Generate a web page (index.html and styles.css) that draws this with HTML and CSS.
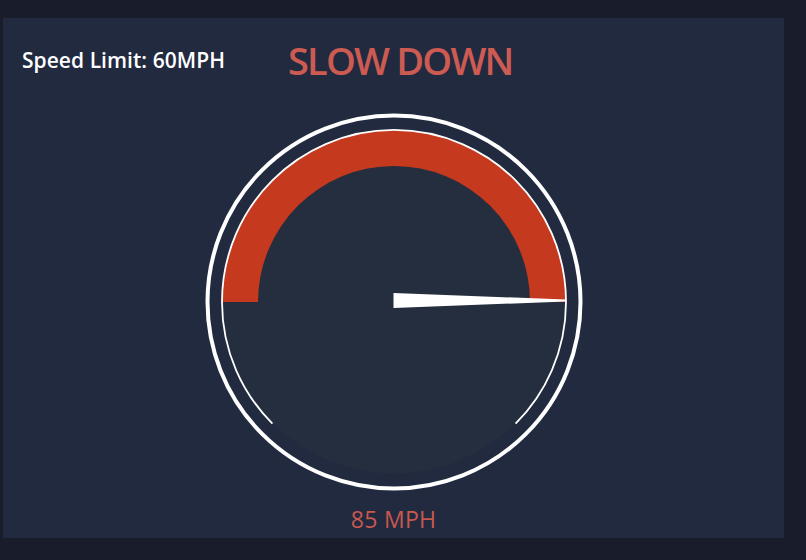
FILE: index.html
```html
<!DOCTYPE html>
<html lang="en">
<head>
    <meta charset="UTF-8">
    <meta name="viewport" content="width=device-width, initial-scale=1.0">
    <title>Speedometer</title>
    <link rel="stylesheet" href="styles.css">
</head>
<body>
    <div class="panel">
        <!-- Top row: limit and warning -->
        <div class="header">
            <span class="limit">Speed Limit: 60MPH</span>
            <h1 class="warning">SLOW DOWN</h1>
        </div>

        <!-- Gauge -->
        <div class="gauge">
            <svg width="400" height="400" viewBox="0 0 400 400">
                <circle cx="200" cy="200" r="186.5" fill="none" stroke="#ffffff" stroke-width="4"/>
                <circle cx="200" cy="200" r="171.5" fill="#252e3e"/>
                <path d="M 28 200 A 172 172 0 0 1 372 200 L 336 200 A 136 136 0 0 0 64 200 Z" fill="#c5391f"/>
                <path d="M 78.4 321.6 A 172 172 0 1 1 321.6 321.6" fill="none" stroke="#ffffff" stroke-width="1.8"/>
                <polygon points="199.5,191 372,197.5 372,199.5 199.5,206" fill="#ffffff"/>
            </svg>
        </div>

        <div class="speed">85 MPH</div>
    </div>
</body>
</html>
```

FILE: styles.css
```css
body {
    margin: 0;
    padding: 18px 0 0 3px;
    background-color: #181c2b;
    font-family: "Open Sans", Arial, sans-serif;
}

.panel {
    width: 781px;
    height: 520px;
    background-color: #222a40;
    box-sizing: border-box;
}

.header {
    display: flex;
    align-items: center;
    height: 84px;
    padding-left: 19px;
}

.limit {
    color: #ffffff;
    font-size: 21px;
    font-weight: 600;
    letter-spacing: 0.05px;
    width: 266px;
}

.warning {
    margin: 0;
    color: #cd5b52;
    font-size: 38px;
    font-weight: 600;
    letter-spacing: -1.8px;
}

.gauge {
    display: flex;
    justify-content: center;
}

.gauge svg {
    display: block;
}

.speed {
    text-align: center;
    color: #c9584f;
    font-size: 23px;
    letter-spacing: 0.3px;
    margin-top: 1px;
}
```
